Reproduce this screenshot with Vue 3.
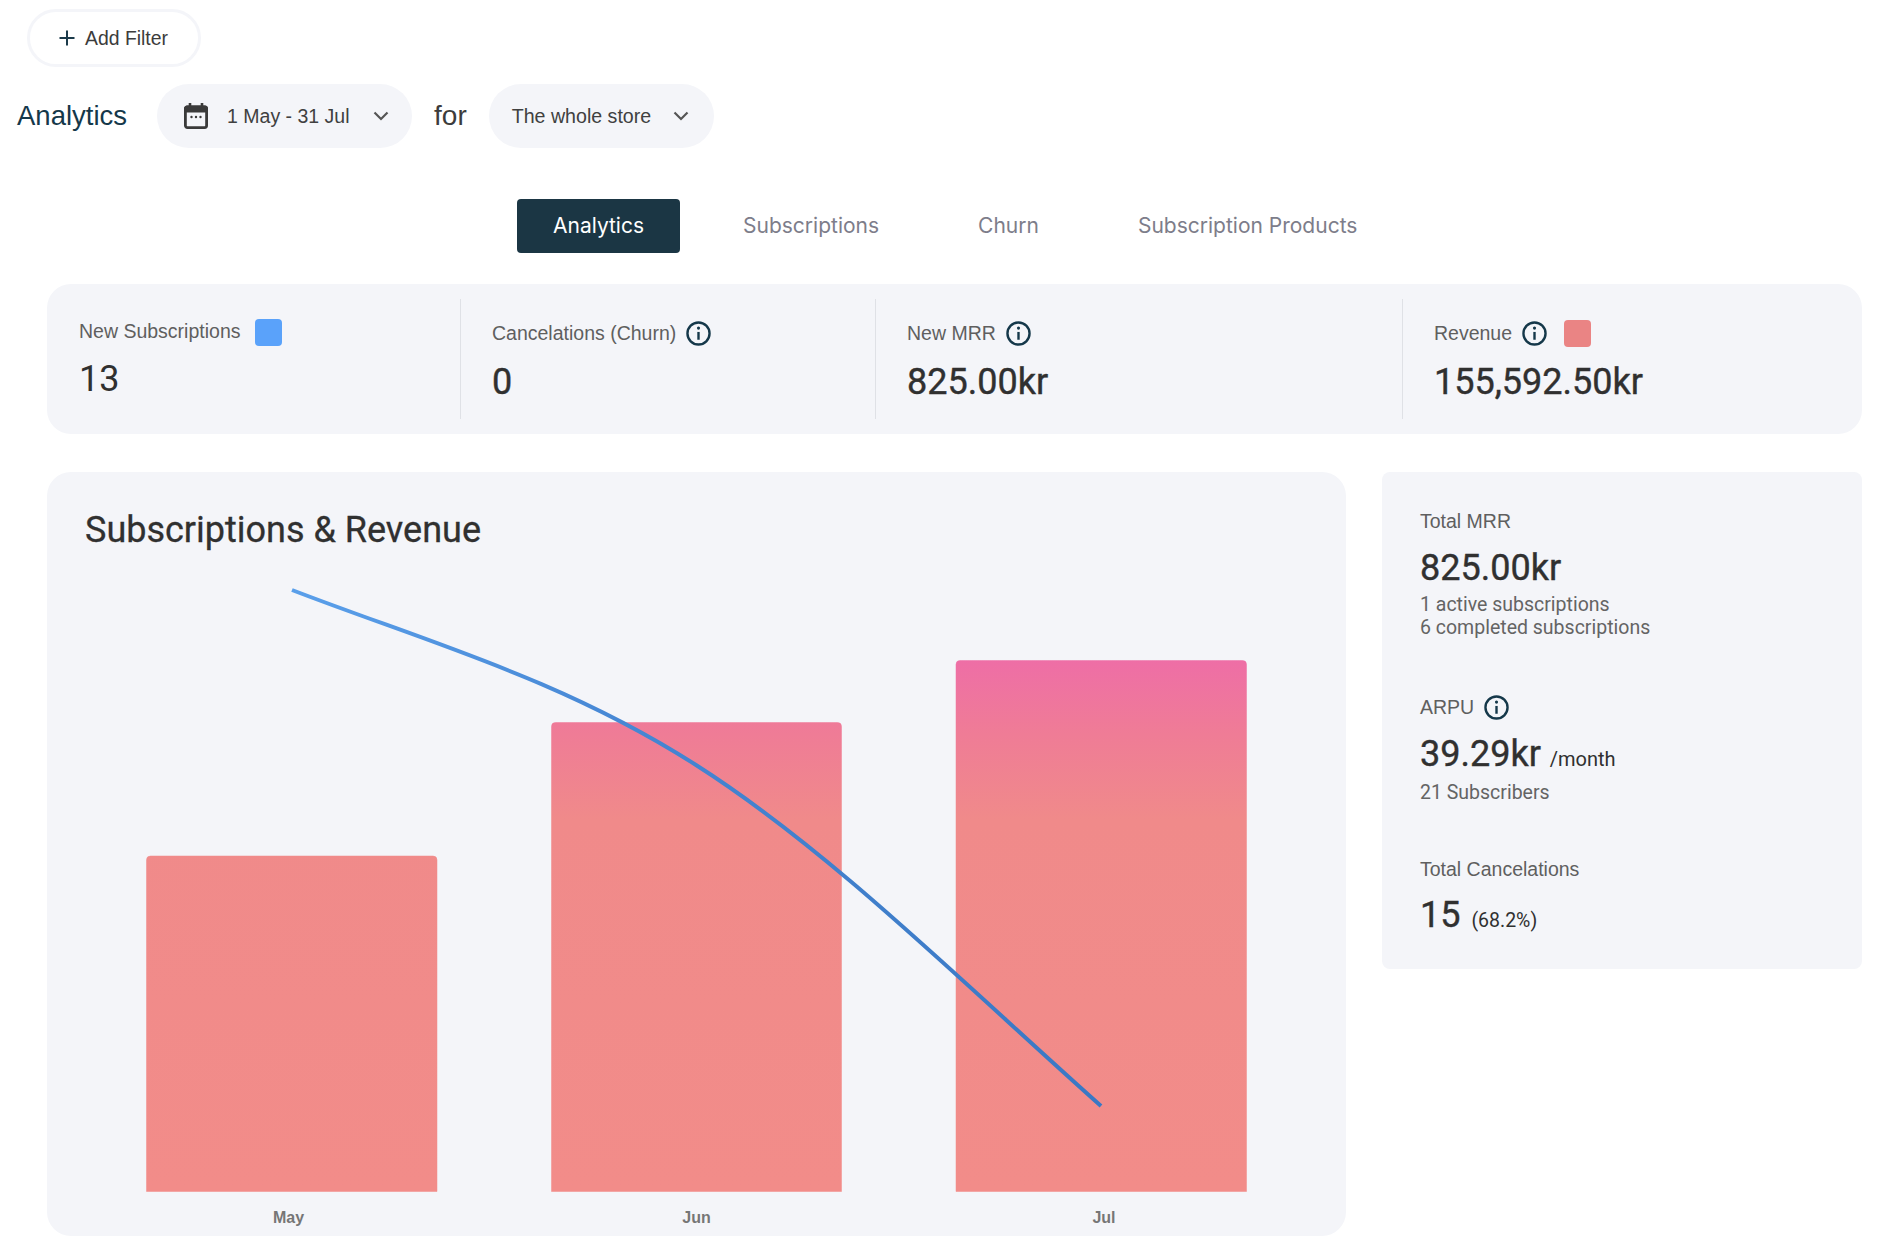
<script setup>
const stats = [
  { label: 'New Subscriptions', value: '13', swatch: 'blue', first: true },
  { label: 'Cancelations (Churn)', value: '0', info: true },
  { label: 'New MRR', value: '825.00kr', info: true },
  { label: 'Revenue', value: '155,592.50kr', info: true, swatch: 'red' },
]
const tabs = ['Analytics', 'Subscriptions', 'Churn', 'Subscription Products']
const bars = [
  { x: 146.5, w: 290.5, top: 856, label: 'May', lx: 288.5 },
  { x: 551.5, w: 290, top: 722.5, label: 'Jun', lx: 696.5 },
  { x: 956, w: 290.5, top: 660.5, label: 'Jul', lx: 1104 },
]
const barPath = (b) => {
  const r = 4
  const bottom = 1191.5
  return `M${b.x} ${bottom}V${b.top + r}Q${b.x} ${b.top} ${b.x + r} ${b.top}H${b.x + b.w - r}Q${b.x + b.w} ${b.top} ${b.x + b.w} ${b.top + r}V${bottom}Z`
}
</script>

<template>
  <div class="page">
    <button class="add-filter">
      <svg class="plus" viewBox="0 0 16 16" width="16" height="16"><path d="M8 0.5V15.5M0.5 8H15.5" /></svg>
      <span>Add Filter</span>
    </button>

    <div class="title-row">
      <h1 class="title">Analytics</h1>
      <div class="pill date-pill">
        <svg class="calendar" viewBox="0 0 24 26" width="24" height="26">
          <path d="M6 0V4M18 0V4" class="cal-pin" />
          <path d="M3 2.5H21C22.6 2.5 24 3.9 24 5.5V9.5H0V5.5C0 3.9 1.4 2.5 3 2.5Z" class="cal-top" />
          <rect x="1.4" y="4" width="21.2" height="20.6" rx="2" class="cal-body" />
          <circle cx="7.5" cy="14" r="1.2" class="cal-top" />
          <circle cx="12" cy="14" r="1.2" class="cal-top" />
          <circle cx="16.5" cy="14" r="1.2" class="cal-top" />
        </svg>
        <span>1 May - 31 Jul</span>
        <svg class="chev" viewBox="0 0 16 10" width="16" height="10"><path d="M1.5 1.5L8 8L14.5 1.5" /></svg>
      </div>
      <span class="for">for</span>
      <div class="pill store-pill">
        <span>The whole store</span>
        <svg class="chev" viewBox="0 0 16 10" width="16" height="10"><path d="M1.5 1.5L8 8L14.5 1.5" /></svg>
      </div>
    </div>

    <nav class="tabs">
      <a v-for="(t, i) in tabs" :key="t" class="tab" :class="{ active: i === 0 }">{{ t }}</a>
    </nav>

    <section class="stats">
      <div v-for="s in stats" :key="s.label" class="stat" :class="{ first: s.first }">
        <div class="stat-head">
          <span class="label">{{ s.label }}</span>
          <svg v-if="s.info" class="info" viewBox="0 0 24 24" width="25" height="25">
            <circle cx="12" cy="12" r="10.6" />
            <path d="M12 10.5V18" />
            <circle cx="12" cy="6.8" r="1.5" class="dot" />
          </svg>
          <span v-if="s.swatch" class="swatch" :class="s.swatch"></span>
        </div>
        <div class="number">{{ s.value }}</div>
      </div>
    </section>

    <div class="main">
      <section class="chart-card">
        <h2 class="chart-title">Subscriptions &amp; Revenue</h2>
        <svg class="chart" viewBox="47 566 1299 670" width="1299" height="670">
          <defs>
            <linearGradient id="barFill" gradientUnits="userSpaceOnUse" x1="0" y1="660" x2="0" y2="1191">
              <stop offset="0" stop-color="#ee6ea6" />
              <stop offset="0.14" stop-color="#ef7c96" />
              <stop offset="0.3" stop-color="#f08a8a" />
              <stop offset="1" stop-color="#f28c89" />
            </linearGradient>
            <linearGradient id="lineFill" gradientUnits="userSpaceOnUse" x1="292" y1="0" x2="1100" y2="0">
              <stop offset="0" stop-color="#5a9fea" />
              <stop offset="0.45" stop-color="#4585d2" />
              <stop offset="1" stop-color="#3a78c4" />
            </linearGradient>
          </defs>
          <path v-for="b in bars" :key="b.label" :d="barPath(b)" class="bar" />
          <path class="line" d="M292 590C427 642 562 679 696 765C831 851 965 985 1101 1106" />
          <text v-for="b in bars" :key="'l' + b.label" :x="b.lx" y="1223" text-anchor="middle" class="axis">{{ b.label }}</text>
        </svg>
      </section>

      <aside class="side">
        <div class="block">
          <div class="label">Total MRR</div>
          <div class="number side-num">825.00kr</div>
          <div class="sub">1 active subscriptions<br />6 completed subscriptions</div>
        </div>
        <div class="block arpu">
          <div class="stat-head">
            <span class="label">ARPU</span>
            <svg class="info" viewBox="0 0 24 24" width="25" height="25">
              <circle cx="12" cy="12" r="10.6" />
              <path d="M12 10.5V18" />
              <circle cx="12" cy="6.8" r="1.5" class="dot" />
            </svg>
          </div>
          <div class="number side-num">39.29kr <small>/month</small></div>
          <div class="sub">21 Subscribers</div>
        </div>
        <div class="block cancel">
          <div class="label">Total Cancelations</div>
          <div class="number side-num">15 <small class="pct">(68.2%)</small></div>
        </div>
      </aside>
    </div>
  </div>
</template>

<style>
body { margin: 0; background: #fff; }
</style>

<style scoped>
.page {
  width: 1878px;
  height: 1254px;
  box-sizing: border-box;
  overflow: hidden;
  padding-top: 9px;
  font-family: Roboto, "Liberation Sans", sans-serif;
  color: #303030;
  background: #fff;
}
.add-filter {
  display: flex;
  align-items: center;
  gap: 10px;
  margin-left: 27px;
  width: 174px;
  height: 58px;
  box-sizing: border-box;
  padding: 0 0 0 29px;
  background: #fff;
  border: 3px solid #f4f5f9;
  border-radius: 29px;
  font: 400 19.4px "Liberation Sans", sans-serif;
  color: #3c3c3c;
}
.plus path { stroke: #1b3a4a; stroke-width: 2; fill: none; }
.title-row {
  display: flex;
  align-items: center;
  height: 64px;
  margin-top: 17px;
  padding-left: 17px;
  font-family: "Liberation Sans", sans-serif;
}
.title {
  margin: 0 30px 0 0;
  font-size: 27.5px;
  font-weight: 400;
  color: #15384a;
}
.pill {
  display: flex;
  align-items: center;
  height: 64px;
  box-sizing: border-box;
  background: #f4f5f9;
  border-radius: 32px;
  font-size: 19.6px;
  color: #404040;
}
.date-pill { width: 255px; padding-left: 27px; font-size: 19.5px; }
.date-pill span { margin: 0 23px 0 19px; }
.store-pill { width: 225px; padding-left: 23px; }
.store-pill span { margin-right: 22px; }
.chev { flex: none; }
.chev path { stroke: #555; stroke-width: 2.2; fill: none; }
.calendar { flex: none; }
.cal-pin { stroke: #3a3a3a; stroke-width: 2.6; fill: none; }
.cal-top { fill: #3a3a3a; }
.cal-body { fill: none; stroke: #3a3a3a; stroke-width: 2.8; }
.for {
  margin: 0 22px;
  font-size: 28px;
  color: #3c3c3c;
}
.tabs {
  display: flex;
  gap: 27px;
  margin: 51px 0 0 517px;
}
.tab {
  height: 54px;
  line-height: 54px;
  padding: 0 36px;
  font-family: Inter, sans-serif;
  font-size: 21px;
  color: #7d7d8a;
  border-radius: 4px;
}
.tab.active { background: #1b3644; color: #fff; }
.stats {
  display: grid;
  grid-template-columns: 413px 415px 527px 1fr;
  width: 1815px;
  height: 150px;
  box-sizing: border-box;
  margin: 31px 0 0 47px;
  padding: 15px 0;
  background: #f4f5f9;
  border-radius: 24px;
}
.stat {
  padding: 21px 0 0 31px;
  border-left: 1px solid #dfe1e6;
}
.stat.first { border-left: 0; padding: 20px 0 0 32px; }
.stat-head {
  display: flex;
  align-items: center;
  gap: 10px;
  height: 27px;
}
.label {
  font-family: "Liberation Sans", sans-serif;
  font-size: 19.5px;
  color: #5f5f5f;
  white-space: nowrap;
}
.stat.first .label { margin-top: -2px; }
.info { flex: none; }
.info circle { fill: none; stroke: #15384a; stroke-width: 2.3; }
.info path { stroke: #15384a; stroke-width: 2.3; fill: none; }
.info .dot { fill: #15384a; stroke: none; }
.swatch {
  width: 27px;
  height: 27px;
  border-radius: 4px;
  margin-left: 5px;
}
.info + .swatch { margin-left: 7px; }
.swatch.blue { background: #5aa2fa; }
.swatch.red { background: #ea8484; }
.number {
  margin-top: 13px;
  font-size: 36px;
  line-height: 44px;
  font-weight: 400;
  -webkit-text-stroke: 0.4px #303030;
  color: #303030;
  white-space: nowrap;
}
.stat.first .number { margin-top: 11px; -webkit-text-stroke: 0; }
.main {
  display: flex;
  gap: 36px;
  margin: 38px 0 0 47px;
}
.chart-card {
  width: 1299px;
  height: 764px;
  background: #f4f5f9;
  border-radius: 24px;
}
.chart-title {
  margin: 0;
  height: 94px;
  padding: 35px 0 0 38px;
  box-sizing: border-box;
  font-size: 36px;
  line-height: 46px;
  font-weight: 400;
  -webkit-text-stroke: 0.3px #303030;
  color: #303030;
}
.chart { display: block; }
.bar { fill: url(#barFill); stroke: url(#barFill); stroke-opacity: 0.5; stroke-width: 1; }
.line { fill: none; stroke: url(#lineFill); stroke-width: 4; }
.axis {
  font-family: "Liberation Sans", sans-serif;
  font-size: 16px;
  font-weight: 700;
  fill: #767676;
}
.side {
  width: 480px;
  height: 497px;
  box-sizing: border-box;
  padding: 37px 0 0 38px;
  background: #f4f5f9;
  border-radius: 8px;
}
.side .label { line-height: 24px; display: block; }
.side .stat-head .label { display: inline; }
.side-num { margin-top: 13px; }
.sub {
  margin-top: 3px;
  font-size: 19.5px;
  line-height: 23px;
  color: #646464;
}
.arpu { margin-top: 56px; }
.arpu .sub { margin-top: 0; }
.cancel { margin-top: 53px; }
.cancel .side-num { margin-top: 12px; }
.side .arpu .stat-head { height: 24px; }
small {
  font-size: 20px;
  font-weight: 400;
  -webkit-text-stroke: 0;
}
.pct { font-size: 19.5px; margin-left: 2px; }
</style>
